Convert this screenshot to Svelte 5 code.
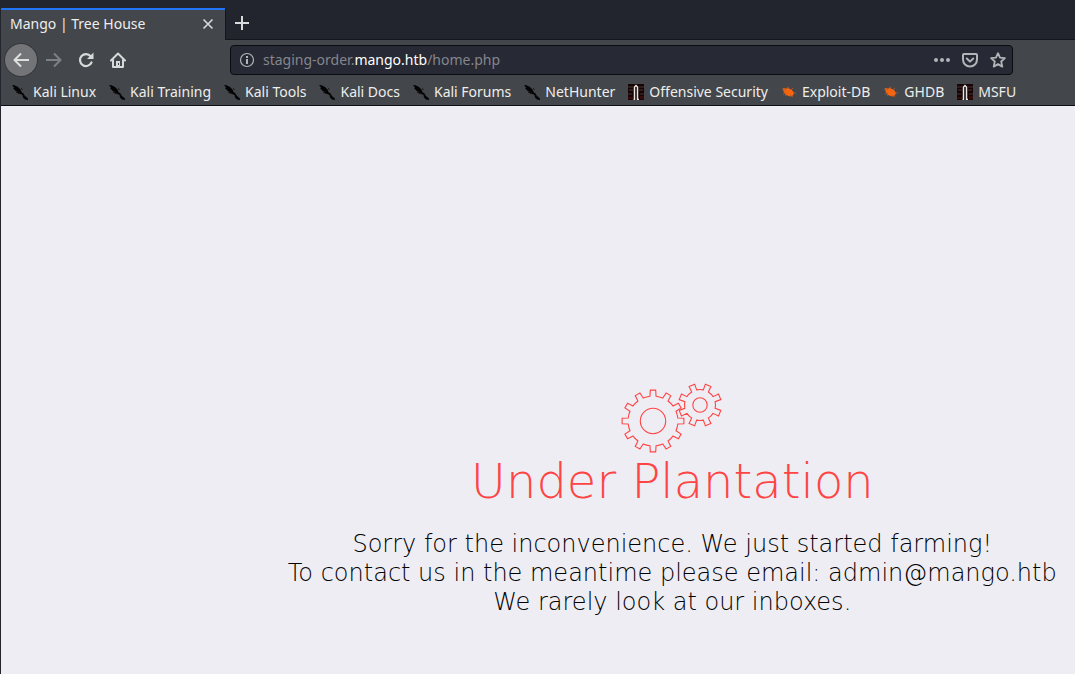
<script>
  const bookmarks = [
    { label: 'Kali Linux', icon: 'kali' },
    { label: 'Kali Training', icon: 'kali' },
    { label: 'Kali Tools', icon: 'kali' },
    { label: 'Kali Docs', icon: 'kali' },
    { label: 'Kali Forums', icon: 'kali' },
    { label: 'NetHunter', icon: 'kali' },
    { label: 'Offensive Security', icon: 'offsec' },
    { label: 'Exploit-DB', icon: 'exploit' },
    { label: 'GHDB', icon: 'exploit' },
    { label: 'MSFU', icon: 'offsec' }
  ];

  // Outline of a cog: each tooth flares from its root to a flat tip.
  function cog(cx, cy, root, tip, teeth, start, rootHalf, tipHalf) {
    const at = (r, deg) => {
      const a = (deg * Math.PI) / 180;
      return `${(cx + r * Math.cos(a)).toFixed(2)} ${(cy + r * Math.sin(a)).toFixed(2)}`;
    };
    let d = '';
    for (let i = 0; i < teeth; i++) {
      const a = start + (i * 360) / teeth;
      d += i === 0 ? `M${at(root, a - rootHalf)}` : `A${root} ${root} 0 0 1 ${at(root, a - rootHalf)}`;
      d += `L${at(tip, a - tipHalf)}L${at(tip, a + tipHalf)}L${at(root, a + rootHalf)}`;
    }
    return d + `A${root} ${root} 0 0 1 ${at(root, start - rootHalf)}Z`;
  }
  const bigCog = cog(32, 38, 25, 31, 12, 0, 7, 5);
  const smallCog = cog(79, 22, 15.5, 21.5, 8, 22.5, 10, 8);
</script>

<div class="browser">
  <header>
    <div class="tabs">
      <div class="tab">
        <span>Mango | Tree House</span>
        <button aria-label="Close tab">
          <svg width="12" height="12" viewBox="0 0 12 12"><path d="M1.5 1.5l9 9M10.5 1.5l-9 9" stroke="#d8d9d9" stroke-width="1.6" fill="none" /></svg>
        </button>
      </div>
      <button class="new" aria-label="New tab">
        <svg width="14" height="14" viewBox="0 0 14 14"><path d="M7 0v14M0 7h14" stroke="#d9dadb" stroke-width="2" /></svg>
      </button>
    </div>

    <nav class="toolbar" aria-label="Navigation">
      <div class="actions">
        <button class="back" aria-label="Back">
          <svg width="16" height="16" viewBox="0 0 16 16"><path d="M16 8H1.5M8 1.5L1.5 8 8 14.5" fill="none" stroke="#dedfdf" stroke-width="2" stroke-linejoin="round" /></svg>
        </button>
        <button aria-label="Forward">
          <svg width="16" height="16" viewBox="0 0 16 16"><path d="M0 8h14.5M8 1.5L14.5 8 8 14.5" fill="none" stroke="#7d8084" stroke-width="2" stroke-linejoin="round" /></svg>
        </button>
        <button aria-label="Reload">
          <svg width="16" height="16" viewBox="0 0 16 16"><path d="M12.7 4.3A6 6 0 1 0 13.5 10.5" fill="none" stroke="#d8d9d9" stroke-width="2.2" stroke-linecap="round" /><path d="M15.5 .5V7H9z" fill="#d8d9d9" /></svg>
        </button>
        <button aria-label="Home">
          <svg width="16" height="16" viewBox="0 0 16 16"><path d="M1 8.5L8 1.5l7 7M3 7.5V15h10V7.5" fill="none" stroke="#d8d9d9" stroke-width="2" stroke-linecap="round" stroke-linejoin="round" /><path d="M6 15V9h4v6z" fill="#d8d9d9" /><path d="M8 11h1v2H8z" fill="#42454a" /></svg>
        </button>
      </div>
      <div class="address">
        <svg width="16" height="16" viewBox="0 0 16 16"><circle cx="8" cy="8" r="6.5" fill="none" stroke="#b3b4b8" stroke-width="1.2" /><path d="M7 4h2v2H7zM7 7h2v5H7z" fill="#b3b4b8" /></svg>
        <a class="url" href="#home">staging-order.<b>mango.htb</b>/home.php</a>
        <button aria-label="Page actions">
          <svg width="16" height="16" viewBox="0 0 16 16" fill="#b3b4b8"><circle cx="2" cy="8" r="2" /><circle cx="8" cy="8" r="2" /><circle cx="14" cy="8" r="2" /></svg>
        </button>
        <button aria-label="Save to Pocket">
          <svg width="16" height="16" viewBox="0 0 16 16" fill="none" stroke="#b3b4b8" stroke-width="2" stroke-linecap="round" stroke-linejoin="round"><path d="M2 2h12a1 1 0 0 1 1 1v4.5a7 7 0 0 1-14 0V3a1 1 0 0 1 1-1z" /><path d="M4.8 6.5L8 9.6l3.2-3.1" /></svg>
        </button>
        <button aria-label="Bookmark this page">
          <svg width="16" height="16" viewBox="0 0 16 16"><path d="M8 1.2l2 4.5 4.9.5-3.7 3.3 1.1 5.1L8 12.1l-4.3 2.5 1.1-5.1L1.1 6.2 6 5.7z" fill="none" stroke="#b3b4b8" stroke-width="1.8" stroke-linejoin="round" /></svg>
        </button>
      </div>
    </nav>

    <nav class="bookmarks" aria-label="Bookmarks">
      {#each bookmarks as mark}
        <a href="#bookmark">
          {#if mark.icon === 'kali'}
            <svg width="16" height="16" viewBox="0 0 16 16"><path d="M0 1l3 .5L6 3l2.5 2.5 1 2.5 2 1.500L13 12l3 2.5V16l-3-.5-2-2-.5-2.5L7 9.5 5 7.5 3 6.500l.5-1L1 4.5l1-1z" fill="#040404" /><path d="M1 1.5l4 2M2 5l3 1.5M4 8l3 1.5M9 4.5l1.5 1" stroke="#000" stroke-width=".8" /></svg>
          {:else if mark.icon === 'offsec'}
            <svg width="16" height="16" viewBox="0 0 16 16"><path fill="#170404" d="M0 0h16v16H0z" /><path d="M0 3h5M1 6h4M11 3h5M11 6h4M0 10h4M12 10h4" stroke="#463332" /><path d="M0 13h5v2H0zM12 12h4v3h-4z" fill="#380b09" /><path d="M5.5 16l1-4V2.500L8 1.200l1.500 1.300V12l1 4z" fill="#090303" /><path d="M5.5 15.500h1V3L8 1.500 9.500 3v12.500h1.500" fill="none" stroke="#e7e2df" stroke-width="1.500" /></svg>
          {:else}
            <svg width="16" height="16" viewBox="0 0 16 16"><path d="M2 4l3 .5L7 4l4 2 2 3-1 2.5-3 1L5 11 2.5 7.5z" fill="#f36510" /><path d="M1 5l4 1M2 10l3-1M5 11l-1 1M9 11l3 2M12 9h3M10 6l2-2M6 4l2-1" stroke="#bd5b28" stroke-width=".8" /></svg>
          {/if}
          <span>{mark.label}</span>
        </a>
      {/each}
    </nav>
  </header>

  <main>
    <svg class="cogs" width="102" height="70" viewBox="0 0 102 70" fill="none" stroke="#ff4444" stroke-width="1.1" aria-hidden="true">
      <path d={bigCog} /><circle cx="32" cy="38" r="12.7" />
      <path d={smallCog} /><circle cx="79" cy="22" r="7.2" />
    </svg>
    <h1>Under Plantation</h1>
    <p>
      Sorry for the inconvenience. We just started farming!<br />
      To contact us in the meantime please email: admin@mango.htb<br />
      We rarely look at our inboxes.
    </p>
  </main>
</div>

<style>
  :global(body) { margin: 0; background: #eeedf4; }
  .browser { min-height: 100vh; box-sizing: border-box; border-left: 1px solid #22252e; font-family: "Noto Sans", sans-serif; font-size: 14px; line-height: 20px; }
  header { background: #43464b; color: #eeeeec; border-bottom: 1px solid #0d0e12; }
  svg { display: block; flex: none; }
  button { display: flex; align-items: center; justify-content: center; padding: 0; border: 0; background: none; }
  a { color: inherit; text-decoration: none; }
  .tabs { display: flex; height: 40px; padding-top: 8px; box-sizing: border-box; background: #22252e; box-shadow: inset 0 -1px #14161c; }
  .tab { width: 224px; box-sizing: border-box; display: flex; align-items: center; justify-content: space-between; padding: 0 11px 2px 9px; border-top: 2px solid #2074f5; background: #43464b; }
  .new { width: 33px; padding-bottom: 2px; border-left: 1px solid #14161c; }
  .toolbar { display: flex; align-items: center; gap: 96px; height: 40px; padding: 0 62px 0 4px; }
  .actions { display: flex; align-items: center; }
  .actions button { width: 32px; height: 32px; }
  .actions .back { margin-right: 1px; border-radius: 50%; background: #737478; box-shadow: 0 0 0 1px #35373b; }
  .address { flex: 1; display: flex; align-items: center; gap: 12px; height: 30px; box-sizing: border-box; padding: 0 6px 0 8px; border: 1px solid #0b0c11; border-radius: 4px; background: #272934; }
  .url { flex: 1; margin-left: -4px; color: #85868c; }
  .url b { font-weight: 400; color: #fff; }
  .bookmarks { display: flex; align-items: center; gap: 13px; height: 23px; padding: 0 11px 2px; }
  .bookmarks a { display: flex; align-items: center; gap: 5px; white-space: nowrap; }
  main { display: flex; flex-direction: column; align-items: center; padding: 277px 0 56px 25%; text-align: center; font-family: "DejaVu Sans", sans-serif; font-weight: 200; }
  h1 { margin: 0; color: #ff4444; font-size: 48px; line-height: 56px; font-weight: 200; }
  p { margin: 21px 0 0; color: #000; font-size: 24px; line-height: 29px; white-space: nowrap; }
</style>
